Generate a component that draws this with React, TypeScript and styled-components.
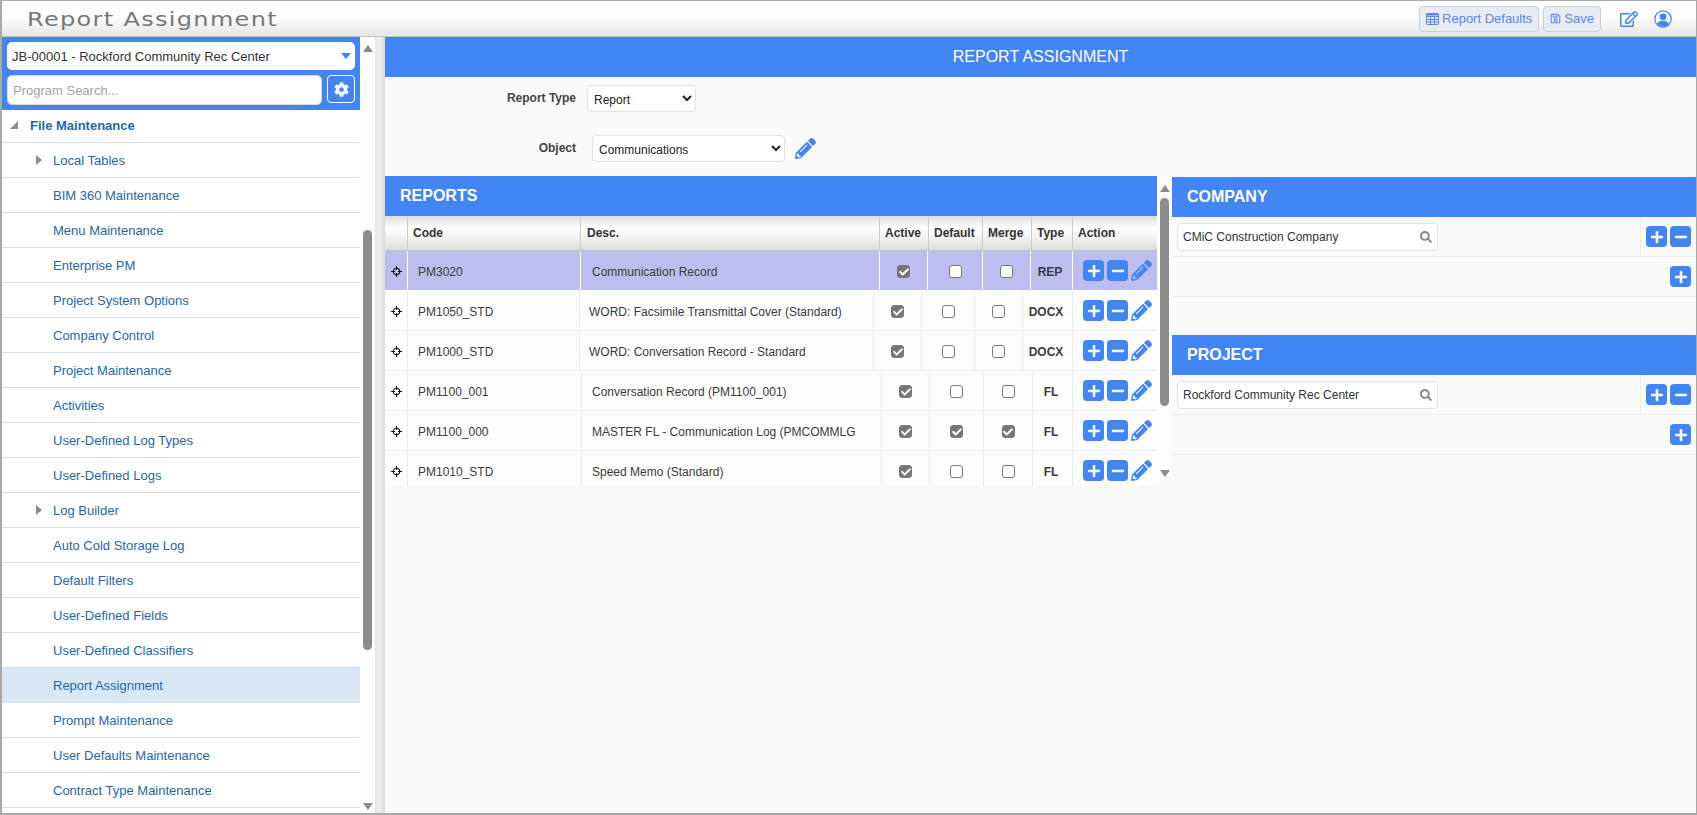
import React from "react";
import styled, { createGlobalStyle } from "styled-components";
import {
  FaCheck,
  FaCog,
  FaMinus,
  FaPencilAlt,
  FaPlus,
  FaRegEdit,
  FaRegSave,
  FaSearch,
} from "react-icons/fa";

const BLUE = "#4285f4";

const GlobalStyle = createGlobalStyle`
  html, body { margin: 0; padding: 0; height: 100%; overflow: hidden; background: #fff; }
  body { font-family: "Liberation Sans", Arial, sans-serif; font-size: 12px; color: #333; }
  * { box-sizing: border-box; }
`;

const Frame = styled.div`
  width: 1697px;
  height: 815px;
  border: 2px solid #a9a9a9;
  border-top-width: 1px;
  border-right-width: 1px;
  display: flex;
  flex-direction: column;
  overflow: hidden;
`;

const TopBar = styled.header`
  height: 36px;
  flex: none;
  display: flex;
  align-items: center;
  padding: 0 24px 0 25px;
  background: linear-gradient(#fff 0%, #fdfdfd 45%, #e6e6e6 100%);
  border-bottom: 1px solid #c4c4c4;
`;

const AppTitle = styled.h1`
  margin: 0 auto 0 0;
  font-family: "DejaVu Sans", sans-serif;
  font-weight: 400;
  font-size: 20px;
  letter-spacing: 1.1px;
  color: #77777a;
  transform: scaleX(1.2);
  transform-origin: left center;
`;

const ToolButton = styled.button`
  height: 26px;
  padding: 0 6px;
  margin-left: 4px;
  display: inline-flex;
  align-items: center;
  gap: 3px;
  border: 1px solid #c6d1dc;
  border-radius: 4px;
  background: #e9edf1;
  color: #5587f5;
  font: 13px "Liberation Sans", Arial, sans-serif;
`;

const TopIcons = styled.div`
  display: flex;
  align-items: center;
  gap: 16px;
  margin-left: 19px;
  color: ${BLUE};
`;

const Body = styled.div`
  flex: 1;
  display: flex;
  min-height: 0;
`;

const Sidebar = styled.aside`
  width: 358px;
  flex: none;
  display: flex;
  flex-direction: column;
  background: #fff;
  overflow: hidden;
`;

const SidebarHead = styled.div`
  height: 73px;
  flex: none;
  background: ${BLUE};
  padding: 5px 5px 0 5px;
  display: flex;
  flex-direction: column;
  gap: 5px;
`;

const JobSelect = styled.div`
  height: 28px;
  background: #fff;
  border-radius: 5px;
  display: flex;
  align-items: center;
  justify-content: space-between;
  padding: 0 4px 0 5px;
  font-size: 13px;
  color: #333;
`;

const Caret = styled.span`
  width: 0;
  height: 0;
  border-left: 5px solid transparent;
  border-right: 5px solid transparent;
  border-top: 6px solid ${BLUE};
`;

const SearchRow = styled.div`
  display: flex;
  gap: 5px;
`;

const ProgramSearch = styled.input`
  flex: 1;
  min-width: 0;
  height: 30px;
  border: 1px solid #d5dbe2;
  border-radius: 5px;
  padding: 0 5px;
  font: 13px "Liberation Sans", Arial, sans-serif;
  &::placeholder { color: #a4a4a4; opacity: 1; }
`;

const GearButton = styled.button`
  width: 28px;
  height: 28px;
  padding: 0;
  display: flex;
  align-items: center;
  justify-content: center;
  background: ${BLUE};
  border: 1px solid #fff;
  border-radius: 4px;
  color: #fff;
`;

const TreeRow = styled.div<{ $active?: boolean; $top?: boolean }>`
  height: ${(p) => (p.$top ? "33px" : "35px")};
  flex: none;
  display: flex;
  align-items: center;
  padding-left: ${(p) => (p.$top ? 28 : 51)}px;
  padding-top: ${(p) => (p.$top ? 0 : 1)}px;
  padding-bottom: ${(p) => (p.$top ? 2 : 0)}px;
  position: relative;
  border-bottom: 1px solid #d6dee7;
  background: ${(p) => (p.$active ? "#dae7f5" : "#fff")};
  color: #1d68ab;
  font-size: 13px;
  font-weight: ${(p) => (p.$top ? 700 : 400)};
`;

const ExpandArrow = styled.span`
  position: absolute;
  left: 34px;
  top: 12px;
  width: 0;
  height: 0;
  border-top: 5px solid transparent;
  border-bottom: 5px solid transparent;
  border-left: 6px solid #8a8a8a;
`;

const OpenArrow = styled.span`
  position: absolute;
  left: 8px;
  top: 11px;
  width: 0;
  height: 0;
  border-left: 8px solid transparent;
  border-bottom: 8px solid #8a8a8a;
`;

const ArrowUp = styled.span`
  width: 0;
  height: 0;
  flex: none;
  border-left: 5px solid transparent;
  border-right: 5px solid transparent;
  border-bottom: 7px solid #8c8c8c;
`;

const ArrowDown = styled.span`
  width: 0;
  height: 0;
  flex: none;
  border-left: 5px solid transparent;
  border-right: 5px solid transparent;
  border-top: 7px solid #8c8c8c;
`;

const SideScroll = styled.div`
  width: 15px;
  flex: none;
  background: #fdfdfd;
  display: flex;
  flex-direction: column;
  align-items: center;
  padding: 8px 0 3px;
`;

const Thumb = styled.div<{ $top: number; $height: number }>`
  width: 9px;
  flex: none;
  margin-top: ${(p) => p.$top}px;
  height: ${(p) => p.$height}px;
  background: #8c8c8c;
  border-radius: 5px;
`;

const Spacer = styled.div`
  flex: 1;
`;

const Gutter = styled.div`
  width: 10px;
  flex: none;
  background: linear-gradient(90deg, #e6e6e6, #eeeeee 50%, #dcdcdc);
`;

const Main = styled.main`
  flex: 1;
  min-width: 0;
  background: #fafafa;
  display: flex;
  flex-direction: column;
`;

const PageBar = styled.div`
  height: 40px;
  flex: none;
  background: ${BLUE};
  color: #fff;
  font-size: 16px;
  display: flex;
  align-items: center;
  justify-content: center;
`;

const FormRow = styled.div<{ $mt: number }>`
  display: flex;
  align-items: center;
  height: 27px;
  margin-top: ${(p) => p.$mt}px;
`;

const FieldLabel = styled.label<{ $gap: number }>`
  width: 191px;
  margin-right: ${(p) => p.$gap}px;
  text-align: right;
  font-weight: 700;
  color: #444;
  position: relative;
  top: -1px;
`;

const Select = styled.select<{ $width: number }>`
  width: ${(p) => p.$width}px;
  height: 27px;
  border: 1px solid #e0e3e7;
  border-radius: 4px;
  background: #fff;
  padding: 2px 2px 0;
  color: #222;
  font: 12px "Liberation Sans", Arial, sans-serif;
`;

const EditLink = styled.span`
  display: flex;
  margin-left: 10px;
  color: ${BLUE};
`;

const Panels = styled.div`
  display: flex;
  margin-top: 14px;
  min-height: 0;
`;

const ReportsColumn = styled.section`
  width: 772px;
  flex: none;
`;

const SectionBar = styled.div`
  height: 40px;
  display: flex;
  align-items: center;
  padding: 0 0 1px 15px;
  background: ${BLUE};
  color: #fff;
  font-size: 16px;
  font-weight: 700;
`;

const HeadRow = styled.div<{ $cols: string }>`
  height: 35px;
  display: grid;
  grid-template-columns: ${(p) => p.$cols};
  background: linear-gradient(#dedede 0%, #fff 35%, #f4f4f4 60%, #dcdcdc 100%);
  border-bottom: 1px solid #c4c4c4;
`;

const HeadCell = styled.div`
  display: flex;
  align-items: center;
  padding-left: 5px;
  border-right: 1px solid #cbcbcb;
  font-weight: 700;
  color: #333;
  &:nth-child(3) { padding-left: 6px; }
  &:last-child { border-right: 0; }
`;

const TableBody = styled.div`
  height: 235px;
  overflow: hidden;
`;

const DataRow = styled.div<{ $cols: string; $selected?: boolean; $descPad: number }>`
  height: 40px;
  display: grid;
  grid-template-columns: ${(p) => p.$cols};
  background: ${(p) => (p.$selected ? "#bdbdf0" : "#fdfdfd")};
  border-bottom: 1px solid ${(p) => (p.$selected ? "#fff" : "#eeeeee")};
  & > div { border-right: 1px solid ${(p) => (p.$selected ? "#fff" : "#eeeeee")}; }
  & > div:nth-child(3) { padding-left: ${(p) => p.$descPad}px; }
  & > div:last-child { border-right: 0; }
`;

const Cell = styled.div<{ $align?: string; $bold?: boolean }>`
  display: flex;
  align-items: center;
  justify-content: ${(p) => p.$align || "flex-start"};
  padding: 2px ${(p) => (p.$bold ? 3 : 0)}px 0 ${(p) => (p.$align ? 0 : 10)}px;
  font-weight: ${(p) => (p.$bold ? 700 : 400)};
  color: #3b3b3b;
  white-space: nowrap;
  overflow: hidden;
`;

const ActionCell = styled(Cell)`
  padding: 0 0 0 10px;
  gap: 3px;
  color: ${BLUE};
`;

const Check = styled.span<{ $on?: boolean }>`
  width: 13px;
  height: 13px;
  display: flex;
  align-items: center;
  justify-content: center;
  border-radius: 3px;
  border: 1px solid #777;
  background: ${(p) => (p.$on ? "#777" : "#fff")};
  color: #fff;
`;

const SquareButton = styled.button`
  width: 21px;
  height: 21px;
  padding: 0;
  display: inline-flex;
  align-items: center;
  justify-content: center;
  flex: none;
  border: 0;
  border-radius: 4px;
  background: ${BLUE};
  color: #fff;
`;

const TableScroll = styled.div`
  width: 15px;
  flex: none;
  height: 301px;
  background: #fdfdfd;
  display: flex;
  flex-direction: column;
  align-items: center;
  padding-top: 9px;
`;

const ScopeColumn = styled.section`
  flex: 1;
  min-width: 0;
  margin-top: 1px;
`;

const ScopeBlock = styled.div`
  margin-bottom: 38px;
`;

const ScopeRow = styled.div`
  height: 40px;
  display: flex;
  align-items: center;
  justify-content: flex-end;
  border-bottom: 1px solid #eeeeee;
`;

const SearchField = styled.div`
  width: 261px;
  height: 28px;
  margin: 0 auto 0 5px;
  display: flex;
  align-items: center;
  justify-content: space-between;
  padding: 0 5px;
  border: 1px solid #e0e3e7;
  border-radius: 4px;
  background: #fff;
  color: #333;
  font-size: 12px;
  svg { color: #888; }
`;

const ScopeActions = styled.div<{ $divider?: boolean }>`
  height: 100%;
  display: flex;
  align-items: center;
  gap: 3px;
  padding: 0 5px;
  ${(p) => p.$divider && "border-left: 1px solid #eeeeee;"}
`;

const UserIcon = () => (
  <svg width="18" height="18" viewBox="0 0 18 18">
    <defs>
      <clipPath id="userRing">
        <circle cx="9" cy="9" r="7.4" />
      </clipPath>
    </defs>
    <circle cx="9" cy="9" r="8.2" fill="none" stroke={BLUE} strokeWidth="1.2" />
    <g clipPath="url(#userRing)" fill={BLUE}>
      <circle cx="9" cy="6.8" r="3.4" />
      <ellipse cx="9" cy="15.6" rx="6.6" ry="4.8" />
    </g>
  </svg>
);

const GridIcon = () => (
  <svg width="13" height="12" viewBox="0 0 13 12" fill="none" stroke="currentColor">
    <rect x="0.5" y="0.5" width="12" height="11" rx="1" />
    <path d="M0.5 3.5h12M0.5 6.5h12M0.5 9h12M4.5 3.5v8M8.5 3.5v8" />
    <path d="M0.5 1.5h12" strokeWidth="2" />
  </svg>
);

const MoveIcon = () => (
  <svg width="11" height="11" viewBox="0 0 11 11" fill="none" stroke="#111">
    <circle cx="5.5" cy="5.5" r="3.2" strokeWidth="1.1" />
    <path d="M5.5 0v4M5.5 7v4M0 5.5h4M7 5.5h4" strokeWidth="1.1" />
  </svg>
);

const treeItems = [
  "Local Tables",
  "BIM 360 Maintenance",
  "Menu Maintenance",
  "Enterprise PM",
  "Project System Options",
  "Company Control",
  "Project Maintenance",
  "Activities",
  "User-Defined Log Types",
  "User-Defined Logs",
  "Log Builder",
  "Auto Cold Storage Log",
  "Default Filters",
  "User-Defined Fields",
  "User-Defined Classifiers",
  "Report Assignment",
  "Prompt Maintenance",
  "User Defaults Maintenance",
  "Contract Type Maintenance",
];

const expandable = ["Local Tables", "Log Builder"];

const HEAD_COLS = "23px 173px 299px 49px 54px 49px 41px 84px";
const COLS_A = "23px 173px 299px 48px 55px 48px 42px 84px";
const COLS_B = "23px 172px 294px 48px 53px 48px 50px 84px";
const COLS_C = "23px 174px 300px 48px 54px 49px 40px 84px";

interface IReportRow {
  code: string;
  desc: string;
  active: boolean;
  isDefault: boolean;
  merge: boolean;
  type: string;
  cols: string;
  descPad: number;
  selected?: boolean;
}

const reports: IReportRow[] = [
  { code: "PM3020", desc: "Communication Record", active: true, isDefault: false, merge: false, type: "REP", cols: COLS_A, descPad: 11, selected: true },
  { code: "PM1050_STD", desc: "WORD: Facsimile Transmittal Cover (Standard)", active: true, isDefault: false, merge: false, type: "DOCX", cols: COLS_B, descPad: 9 },
  { code: "PM1000_STD", desc: "WORD: Conversation Record - Standard", active: true, isDefault: false, merge: false, type: "DOCX", cols: COLS_B, descPad: 9 },
  { code: "PM1100_001", desc: "Conversation Record (PM1100_001)", active: true, isDefault: false, merge: false, type: "FL", cols: COLS_C, descPad: 10 },
  { code: "PM1100_000", desc: "MASTER FL - Communication Log (PMCOMMLG", active: true, isDefault: true, merge: true, type: "FL", cols: COLS_C, descPad: 10 },
  { code: "PM1010_STD", desc: "Speed Memo (Standard)", active: true, isDefault: false, merge: false, type: "FL", cols: COLS_C, descPad: 10 },
];

const scopes = [
  { title: "COMPANY", value: "CMiC Construction Company" },
  { title: "PROJECT", value: "Rockford Community Rec Center" },
];

const Tick = ({ on }: { on?: boolean }) => (
  <Check $on={on}>{on && <FaCheck size={10} />}</Check>
);

export default function App() {
  return (
    <Frame>
      <GlobalStyle />
      <TopBar>
        <AppTitle>Report Assignment</AppTitle>
        <ToolButton>
          <GridIcon /> Report Defaults
        </ToolButton>
        <ToolButton>
          <FaRegSave size={11} /> Save
        </ToolButton>
        <TopIcons>
          <FaRegEdit size={18} />
          <UserIcon />
        </TopIcons>
      </TopBar>
      <Body>
        <Sidebar>
          <SidebarHead>
            <JobSelect>
              JB-00001 - Rockford Community Rec Center
              <Caret />
            </JobSelect>
            <SearchRow>
              <ProgramSearch placeholder="Program Search..." />
              <GearButton>
                <FaCog size={15} />
              </GearButton>
            </SearchRow>
          </SidebarHead>
          <TreeRow $top>
            <OpenArrow />
            File Maintenance
          </TreeRow>
          {treeItems.map((item) => (
            <TreeRow key={item} $active={item === "Report Assignment"}>
              {expandable.includes(item) && <ExpandArrow />}
              {item}
            </TreeRow>
          ))}
        </Sidebar>
        <SideScroll>
          <ArrowUp />
          <Thumb $top={178} $height={420} />
          <Spacer />
          <ArrowDown />
        </SideScroll>
        <Gutter />
        <Main>
          <PageBar>REPORT ASSIGNMENT</PageBar>
          <FormRow $mt={8}>
            <FieldLabel $gap={11}>Report Type</FieldLabel>
            <Select $width={109} defaultValue="Report">
              <option>Report</option>
            </Select>
          </FormRow>
          <FormRow $mt={23}>
            <FieldLabel $gap={16}>Object</FieldLabel>
            <Select $width={193} defaultValue="Communications">
              <option>Communications</option>
            </Select>
            <EditLink>
              <FaPencilAlt size={21} />
            </EditLink>
          </FormRow>
          <Panels>
            <ReportsColumn>
              <SectionBar>REPORTS</SectionBar>
              <HeadRow $cols={HEAD_COLS}>
                <HeadCell />
                <HeadCell>Code</HeadCell>
                <HeadCell>Desc.</HeadCell>
                <HeadCell>Active</HeadCell>
                <HeadCell>Default</HeadCell>
                <HeadCell>Merge</HeadCell>
                <HeadCell>Type</HeadCell>
                <HeadCell>Action</HeadCell>
              </HeadRow>
              <TableBody>
                {reports.map((r) => (
                  <DataRow key={r.code} $cols={r.cols} $selected={r.selected} $descPad={r.descPad}>
                    <Cell $align="center">
                      <MoveIcon />
                    </Cell>
                    <Cell>{r.code}</Cell>
                    <Cell>{r.desc}</Cell>
                    <Cell $align="center">
                      <Tick on={r.active} />
                    </Cell>
                    <Cell $align="center">
                      <Tick on={r.isDefault} />
                    </Cell>
                    <Cell $align="center">
                      <Tick on={r.merge} />
                    </Cell>
                    <Cell $align="center" $bold>
                      {r.type}
                    </Cell>
                    <ActionCell>
                      <SquareButton>
                        <FaPlus size={14} />
                      </SquareButton>
                      <SquareButton>
                        <FaMinus size={14} />
                      </SquareButton>
                      <FaPencilAlt size={21} />
                    </ActionCell>
                  </DataRow>
                ))}
              </TableBody>
            </ReportsColumn>
            <TableScroll>
              <ArrowUp />
              <Thumb $top={6} $height={208} />
              <Spacer />
              <ArrowDown />
            </TableScroll>
            <ScopeColumn>
              {scopes.map((s) => (
                <ScopeBlock key={s.title}>
                  <SectionBar>{s.title}</SectionBar>
                  <ScopeRow>
                    <SearchField>
                      {s.value}
                      <FaSearch size={12} />
                    </SearchField>
                    <ScopeActions $divider>
                      <SquareButton>
                        <FaPlus size={14} />
                      </SquareButton>
                      <SquareButton>
                        <FaMinus size={14} />
                      </SquareButton>
                    </ScopeActions>
                  </ScopeRow>
                  <ScopeRow>
                    <ScopeActions>
                      <SquareButton>
                        <FaPlus size={14} />
                      </SquareButton>
                    </ScopeActions>
                  </ScopeRow>
                </ScopeBlock>
              ))}
            </ScopeColumn>
          </Panels>
        </Main>
      </Body>
    </Frame>
  );
}
